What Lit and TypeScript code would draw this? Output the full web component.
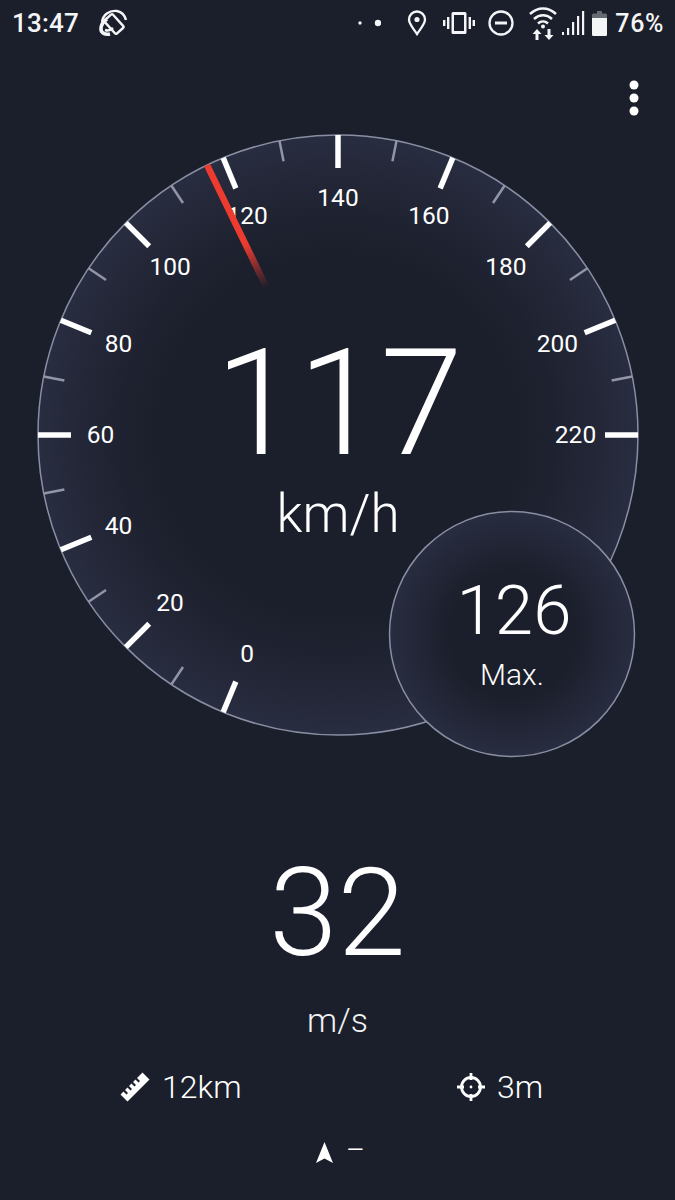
import { LitElement, html, svg, css } from "lit";
import { customElement } from "lit/decorators.js";

const CX = 338, CY = 435;
const pt = (deg: number, r: number, cx = CX, cy = CY) => {
  const a = (deg * Math.PI) / 180;
  return [cx + r * Math.sin(a), cy - r * Math.cos(a)];
};
const angle = (v: number) => ((v - 140) / 20) * 22.5;

@customElement("app-root")
export class AppRoot extends LitElement {
  static styles = css`
    :host { display: block; width: 675px; height: 1200px; background: #1b1f2b; color: #fff; font-family: Roboto, "Liberation Sans", sans-serif; overflow: hidden; }
    .page { display: flex; flex-direction: column; height: 1200px; }
    .status { display: flex; align-items: center; height: 46px; padding: 0 11px 0 12px; font-family: Roboto, sans-serif; font-weight: 500; font-size: 26px; letter-spacing: 0.2px; color: #f4f5f6; flex: none; }
    .status .time { margin-right: 19px; }
    .status .spacer { flex: 1; }
    .status svg { display: block; flex: none; }
    .pct { margin-left: 8px; letter-spacing: 0.6px; font-size: 25px; }
    .dots { margin-right: 26px; }
    .pin { margin-right: 16px; }
    .vib { margin-right: 13px; }
    .dnd { margin-right: 15px; }
    .wifi { margin-right: 5px; }
    .sig { margin-right: 7px; }
    .gauge { display: block; flex: none; width: 675px; height: 754px; }
    .gauge text { fill: #fff; font-family: Roboto, sans-serif; text-anchor: middle; }
    .tick-label { font-size: 24.5px; font-weight: 400; }
    .big { font-size: 149px; font-weight: 300; }
    .unit { font-size: 53px; font-weight: 300; }
    .maxv { font-size: 69px; font-weight: 300; }
    .maxl { font-size: 30px; font-weight: 300; }
    .speed { display: flex; flex-direction: column; align-items: center; flex: none; }
    .ms { font-size: 123px; font-weight: 300; line-height: 130px; margin-top: 48px; }
    .msu { font-size: 34px; font-weight: 300; line-height: 42px; margin-top: 21px; color: #f2f3f5; }
    .info { display: flex; justify-content: space-between; padding: 0 132px 0 120px; margin-top: 26px; flex: none; }
    .item { display: flex; align-items: center; gap: 12px; font-size: 32px; font-weight: 300; line-height: 40px; }
    .heading { display: flex; align-items: flex-start; justify-content: center; gap: 13px; margin-top: 29px; font-size: 29px; font-weight: 300; line-height: 28px; padding-left: 6px; }
    .heading svg { margin-top: 6px; }
  `;

  private ticks() {
    const out = [];
    for (let v = 0; v <= 220; v += 20) {
      const a = angle(v);
      const [x1, y1] = pt(a, 300);
      const [x2, y2] = pt(a, 267);
      out.push(svg`<line x1=${x1} y1=${y1} x2=${x2} y2=${y2} stroke="#fff" stroke-width="5.5"/>`);
      const [tx, ty] = pt(a, 237.5);
      out.push(svg`<text class="tick-label" x=${tx} y=${ty + 8}>${v}</text>`);
      if (v < 220) {
        const b = angle(v + 10);
        const [a1, a2] = pt(b, 300);
        const [b1, b2] = pt(b, 279);
        out.push(svg`<line x1=${a1} y1=${a2} x2=${b1} y2=${b2} stroke="#9195a6" stroke-width="2.5"/>`);
      }
    }
    return out;
  }

  private gauge() {
    const a = angle(117);
    const [nx1, ny1] = pt(a, 300);
    const [nx2, ny2] = pt(a, 164);
    return html`<svg class="gauge" viewBox="0 46 675 754" width="675" height="754">
      <defs>
        <radialGradient id="gbg" cx=${CX} cy=${CY} r="300" gradientUnits="userSpaceOnUse">
          <stop offset="0.6" stop-color="#1b1f2b"/>
          <stop offset="0.85" stop-color="#222636"/>
          <stop offset="1" stop-color="#292d41"/>
        </radialGradient>
        <radialGradient id="mbg" cx="512" cy="634" r="123" gradientUnits="userSpaceOnUse">
          <stop offset="0.5" stop-color="#1b1f2b"/>
          <stop offset="0.85" stop-color="#24283a"/>
          <stop offset="1" stop-color="#292d41"/>
        </radialGradient>
        <linearGradient id="needle" gradientUnits="userSpaceOnUse" x1=${nx1} y1=${ny1} x2=${nx2} y2=${ny2}>
          <stop offset="0" stop-color="#ee3b30"/>
          <stop offset="0.65" stop-color="#ee3b30"/>
          <stop offset="1" stop-color="#ee3b30" stop-opacity="0"/>
        </linearGradient>
      </defs>
      <circle cx=${CX} cy=${CY} r="300" fill="url(#gbg)" stroke="#8a8ea3" stroke-width="1.5"/>
      ${this.ticks()}
      <line x1=${nx1} y1=${ny1} x2=${nx2} y2=${ny2} stroke="url(#needle)" stroke-width="6.5"/>
      <text class="big" x="339" y="454">117</text>
      <text class="unit" x=${CX} y="532">km/h</text>
      <circle cx="512" cy="634" r="122.5" fill="url(#mbg)" stroke="#8a8ea3" stroke-width="1.5"/>
      <text class="maxv" x="514" y="634">126</text>
      <text class="maxl" x="512" y="685">Max.</text>
      <g fill="#fff"><circle cx="634" cy="85" r="4.5"/><circle cx="634" cy="98" r="4.5"/><circle cx="634" cy="111" r="4.5"/></g>
    </svg>`;
  }

  render() {
    return html`<div class="page">
      <div class="status">
        <span class="time">13:47</span>
        <svg width="30" height="30" viewBox="0 0 30 30" fill="none" stroke="#f4f5f6" stroke-width="2.4">
          <rect x="10.500" y="7" width="11" height="18" rx="1.500" transform="rotate(-42 16 16)" />
          <path d="M4 14C5 7 11 2 19 3c5 1 8 5 9 9" stroke-width="2.400"/>
          <path d="M9 11c-3 2-6 6-6 10 0 4 4 6 9 5" stroke-width="3.600"/>
          <path d="M7 22c3 1 6 0 8-2" stroke-width="2.600"/>
        </svg>
        <span class="spacer"></span>
        <svg class="dots" width="24" height="10" viewBox="0 0 24 10" fill="#f4f5f6"><circle cx="3" cy="5" r="1.700"/><circle cx="21" cy="5" r="3.200"/></svg>
        <svg class="pin" width="20" height="26" viewBox="0 0 20 26" fill="none" stroke="#f4f5f6" stroke-width="2.300"><path d="M10 24C6 18 2 14 2 9.500a8 8 0 0 1 16 0C18 14 14 18 10 24Z"/><circle cx="10" cy="9.500" r="2.600" fill="#f4f5f6" stroke="none"/></svg>
        <svg class="vib" width="32" height="24" viewBox="0 0 32 24" fill="#f4f5f6"><path fill-rule="evenodd" d="M10 1h12a1.500 1.500 0 0 1 1.500 1.500v19A1.500 1.500 0 0 1 22 23H10a1.500 1.500 0 0 1-1.500-1.500v-19A1.500 1.500 0 0 1 10 1Zm1 3v16h10V4Z"/><rect x="4" y="6" width="2.400" height="12"/><rect x="0" y="9" width="2.400" height="6"/><rect x="25.600" y="6" width="2.400" height="12"/><rect x="29.600" y="9" width="2.400" height="6"/></svg>
        <svg class="dnd" width="26" height="26" viewBox="0 0 26 26" fill="none" stroke="#f4f5f6" stroke-width="2.300"><circle cx="13" cy="13" r="11.500"/><path d="M7 13h12" stroke-width="3"/></svg>
        <svg class="wifi" width="28" height="34" viewBox="0 0 28 34" fill="none" stroke="#f4f5f6" stroke-width="2.500"><path d="M1 8c8-7.500 18-7.500 26 0M5 13c5.500-5 12.500-5 18 0M9 17.500c3-2.800 7-2.800 10 0"/><circle cx="14" cy="20.500" r="2" fill="#f4f5f6" stroke="none"/><path fill="#f4f5f6" stroke="none" d="M8 23l-4.500 5H6.500v6h3v-6h3ZM20 34l4.500-5h-3v-6h-3v6h-3Z"/></svg>
        <svg class="sig" width="23" height="26" viewBox="0 0 23 26" fill="#f4f5f6"><rect x="0" y="22" width="2" height="3"/><rect x="5" y="18" width="2.200" height="7"/><rect x="10" y="12" width="2.200" height="13"/><rect x="15" y="6" width="2.200" height="19"/><rect x="20" y="1" width="2.200" height="24"/></svg>
        <svg width="15" height="25" viewBox="0 0 15 25" fill="#f4f5f6"><path d="M5 0h5v2.500h3.500a1.500 1.500 0 0 1 1.500 1.500V23.500a1.500 1.500 0 0 1-1.500 1.500H1.500A1.500 1.500 0 0 1 0 23.500V4a1.500 1.500 0 0 1 1.500-1.500H5Z" opacity="0.35"/><path d="M0 7h15v16.500a1.500 1.500 0 0 1-1.500 1.500H1.500A1.500 1.500 0 0 1 0 23.500Z"/></svg>
        <span class="pct">76%</span>
      </div>
      ${this.gauge()}
      <div class="speed">
        <div class="ms">32</div>
        <div class="msu">m/s</div>
      </div>
      <div class="info">
        <div class="item">
          <svg width="30" height="30" viewBox="0 0 30 30" fill="#fff"><path d="M22.500 0.500 29.500 7.500 7.500 29.500 0.500 22.500 3.500 19.500 6.500 22.500 8 21 5 18 7.500 15.500 10.500 18.500 12 17 9 14 11.500 11.500 14.500 14.500 16 13 13 10 15.500 7.500 18.500 10.500 20 9 17 6Z"/></svg>
          <span>12km</span>
        </div>
        <div class="item">
          <svg width="28" height="28" viewBox="0 0 28 28" fill="none" stroke="#fff" stroke-width="2.800"><circle cx="14" cy="14" r="9.500"/><path d="M14 0v7M14 21v7M0 14h7M21 14h7"/><circle cx="14" cy="14" r="1.400" fill="#fff" stroke="none"/></svg>
          <span>3m</span>
        </div>
      </div>
      <div class="heading">
        <svg width="17" height="21" viewBox="0 0 17 21" fill="#fff"><path d="M8.500 0 17 21 8.500 16.500 0 21Z"/></svg>
        <span>–</span>
      </div>
    </div>`;
  }
}
